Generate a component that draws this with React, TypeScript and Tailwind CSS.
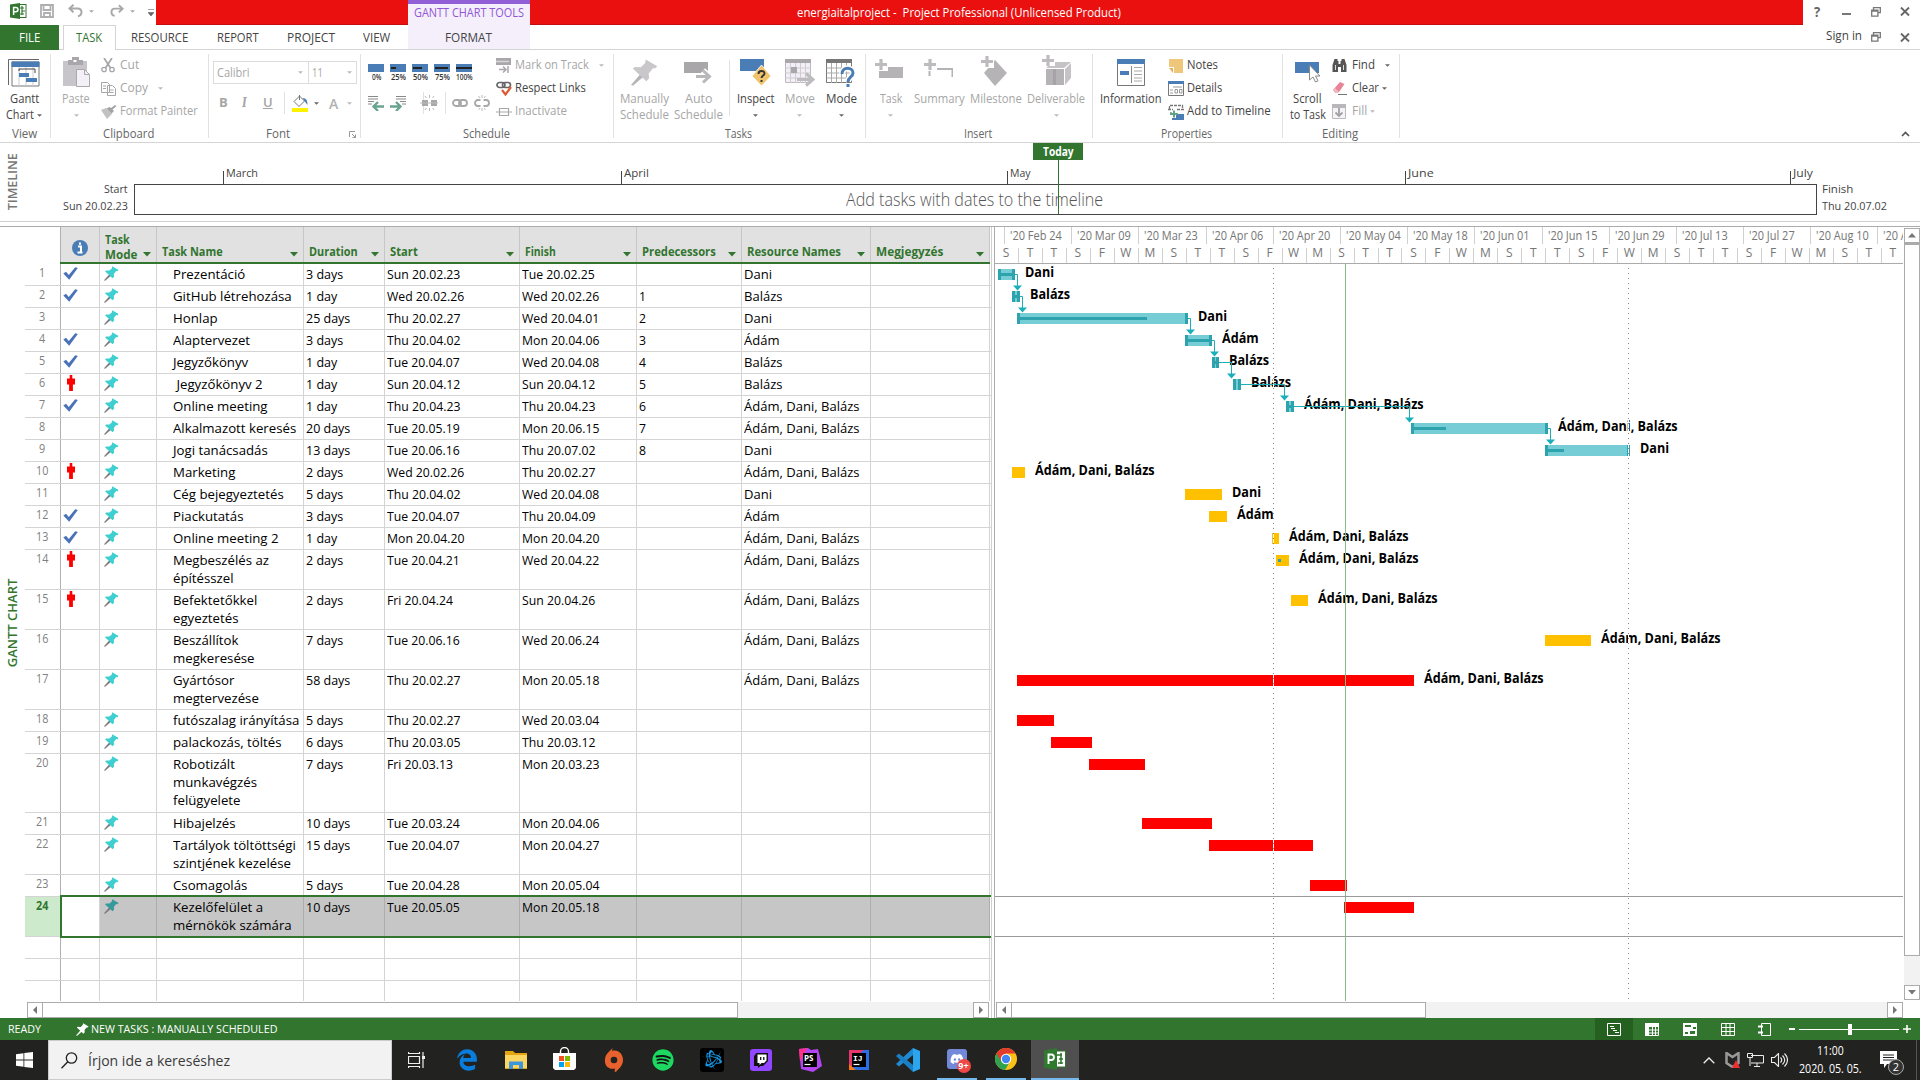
import React, { useLayoutEffect, useRef } from "react";
import { FaSpotify, FaTwitch, FaDiscord, FaEdgeLegacy, FaBattleNet } from "react-icons/fa";

/** Condensed text: scaled horizontally to a width, or by a factor. */
function T({ children, w, k = 0.94, c = "" }: { children: React.ReactNode; w?: number; k?: number; c?: string }) {
  const outer = useRef<HTMLSpanElement>(null);
  const inner = useRef<HTMLSpanElement>(null);
  useLayoutEffect(() => {
    const fit = () => {
      const n = inner.current!.offsetWidth;
      const target = w ?? n * k;
      outer.current!.style.width = target + "px";
      inner.current!.style.transform = `scaleX(${target / n})`;
    };
    fit();
    document.fonts?.ready.then(fit);
  }, [w, k]);
  return (
    <span ref={outer} className={"inline-block shrink-0 " + c}>
      <span ref={inner} className="inline-block origin-left whitespace-pre">{children}</span>
    </span>
  );
}

const Caret = ({ c = "text-[#666]", s = 5 }: { c?: string; s?: number }) => (
  <svg width={s} height={3} viewBox="0 0 6 3" className={"shrink-0 " + c}><path d="M0 0h6L3 3z" fill="currentColor" /></svg>
);

function Pin({ color = "#40cfd0", needle = "#777", s = 15 }: { color?: string; needle?: string; s?: number }) {
  return (
    <svg width={s} height={s} viewBox="0 0 15 15" className="shrink-0">
      <path d="M5.6 8.2 0.3 14.3l.8.3L7 9.6z" fill={needle} stroke={needle} strokeWidth=".4" />
      <path d="M8.2.3 14.6 4l-1.1 1.2-1.3-.1-2.400 3 .3 2.600-1.600 1.600L1 5.300l1.200-.9 3.200.2 2.400-2.200z" fill={color} />
    </svg>
  );
}
const Check = () => (
  <svg width="15" height="13" viewBox="0 0 15 13"><path d="M.3 6.500 3 4.800 5.800 8 12.200.2 14.800 1 6.200 12.800z" fill="#4a72b8" /></svg>
);
const Person = () => (
  <svg width="8" height="16" viewBox="0 0 8 16"><path d="M2.700 0h2.600v3.400H8v6H5.900V16H2.100V9.400H0v-6h2.700z" fill="#f00" /></svg>
);

/* ---------- title bar and tabs ---------- */
const WinBtns = () => (
  <svg width="10" height="10" viewBox="0 0 10 10" className="shrink-0"><path d="M2.500 2.500V.7H9.300v5H7M.7 3.200h6.200v6H.7zM.7 4h6.200" fill="none" stroke="#777" strokeWidth="1.300" /></svg>
);
const XIcon = () => <svg width="10" height="9" viewBox="0 0 10 9" className="shrink-0"><path d="M1 .5l8 8M9 .5l-8 8" stroke="#666" strokeWidth="1.900" /></svg>;

function TitleBar() {
  return (
    <div className="flex h-[25px] w-full bg-white">
      <div className="flex w-[156px] items-center pl-[10px] pb-[3px]">
        <svg width="17" height="16" viewBox="0 0 17 16"><rect x="8" y="1.500" width="8" height="13" fill="#fff" stroke="#31752f" /><path d="M10 5h4M12 8h3M10 11h4M12 3v9" stroke="#31752f" strokeWidth="1.200" /><path d="M0 1.500 10 0v16L0 14.500z" fill="#31752f" /><path d="M3.600 12V4.400h2.200a2 2 0 0 1 0 4.400H3.800" fill="none" stroke="#fff" strokeWidth="1.500" /></svg>
        <svg className="ml-[13px]" width="14" height="14" viewBox="0 0 14 14"><path d="M1 1h12v12H1zM3.500 1v5h7V1M4 13V9h6v4" fill="none" stroke="#b0aeb1" strokeWidth="1.800" /></svg>
        <svg className="ml-[14px]" width="15" height="14" viewBox="0 0 15 14"><path d="M1.500 4.500h8.200c5 0 5 7 .3 7.800M5.500.8 1.500 4.500l4 3.800" fill="none" stroke="#aaa8ab" strokeWidth="2" /></svg>
        <span className="ml-[6px] flex"><Caret c="text-[#aaa]" /></span>
        <svg className="ml-[16px]" width="14" height="14" viewBox="0 0 15 14"><path d="M13.500 4.500H5.300c-5 0-5 7-.3 7.800M9.500.8l4 3.700-4 3.800" fill="none" stroke="#aaa8ab" strokeWidth="2" /></svg>
        <span className="ml-[6px] flex"><Caret c="text-[#aaa]" /></span>
        <svg className="ml-[13px] mt-[3px]" width="6" height="7" viewBox="0 0 6 7"><path d="M0 .5h6M0 3.500h6L3 7z" fill="#666" stroke="#666" strokeWidth=".6" /></svg>
      </div>
      <div className="w-[252px] border-b border-[#c40d0d] bg-[#ea100f]" />
      <div className="flex w-[122px] justify-center border-t-4 border-[#925fd6] bg-[#f5effc] pr-[1px] text-[12px] leading-[17px] text-[#8e56d3]"><T w={110}>GANTT CHART TOOLS</T></div>
      <div className="flex w-[1273px] border-b border-[#c40d0d] bg-[#ea100f] pl-[267px] text-[12px] leading-[25px] text-white"><T w={324}>energiaitalproject -  Project Professional (Unlicensed Product)</T></div>
      <div className="flex flex-1 items-center pb-[2px] pl-[11px]">
        <span className="w-[9px] text-[14px] font-bold text-[#666]"><T>?</T></span>
        <span className="ml-[19px] mt-[5px] h-[2px] w-[9px] bg-[#777]" />
        <span className="ml-[20px]"><WinBtns /></span>
        <span className="ml-[19px]"><XIcon /></span>
      </div>
    </div>
  );
}

function Tabs() {
  return (
    <div className="flex h-[25px] w-full text-[12px] leading-[25px] text-[#444]">
      <div className="flex w-[59px] justify-center bg-[#31752f] text-white"><T w={21}>FILE</T></div>
      <div className="w-[4px] border-b border-[#d4d4d4]" />
      <div className="flex w-[53px] justify-center border-x border-t border-[#d4d4d4] pr-[2px] leading-[24px] text-[#31752f]"><T w={26}>TASK</T></div>
      <div className="flex flex-1 border-b border-[#d4d4d4]">
        <T w={57} c="ml-[15px]">RESOURCE</T>
        <T w={42} c="ml-[29px]">REPORT</T>
        <T w={48} c="ml-[28px]">PROJECT</T>
        <T w={27} c="ml-[28px]">VIEW</T>
        <div className="ml-[18px] flex w-[122px] justify-center bg-[#f5effc] pr-[2px]"><T w={47}>FORMAT</T></div>
        <div className="ml-auto flex h-[24px] items-center pr-[10px]">
          <T w={36} c="-mt-[4px] mr-[9px]">Sign in</T>
          <WinBtns /><span className="ml-[19px]"><XIcon /></span>
        </div>
      </div>
    </div>
  );
}

/* ---------- ribbon ---------- */
function Group({ label, w, lw, children, launcher }: { label: string; w: string; lw: number; children: React.ReactNode; launcher?: boolean }) {
  return (
    <div className={"flex h-[92px] shrink-0 flex-col " + w}>
      <div className="mt-[4px] flex h-[84px] flex-col border-r border-[#e1e1e1]">
        <div className="flex h-[72px] shrink-0">{children}</div>
        <div className="flex h-[16px] items-center text-[12px] leading-[16px] text-[#666]">
          <div className={"flex flex-1 justify-center pr-[2px] " + (launcher ? "pr-[0px]" : "")}><T w={lw}>{label}</T></div>
          {launcher && <svg className="mr-[4px]" width="7" height="7" viewBox="0 0 7 7"><path d="M.5 6V.5H6M3 3l3.500 3.500M6.500 3.500v3h-3" fill="none" stroke="#999" /></svg>}
        </div>
      </div>
    </div>
  );
}
function Big({ icon, l1, l2, w, w1, w2, dim, caret }: { icon: React.ReactNode; l1: string; l2?: string; w: string; w1: number; w2?: number; dim?: boolean; caret?: boolean }) {
  const col = dim ? "text-[#a6a6a6]" : "text-[#444]";
  return (
    <div className={`flex shrink-0 flex-col items-center text-[12px] leading-[16px] ${col} ${w}`}>
      <div className="flex h-[37px] items-center justify-center">{icon}</div>
      <T w={w1}>{l1}</T>
      <div className="flex h-[16px] items-center justify-center gap-[3px]">
        {l2 && <T w={w2}>{l2}</T>}
        {caret && <Caret c={dim ? "text-[#bbb]" : "text-[#666]"} />}
      </div>
    </div>
  );
}
function Small({ icon, l, w, dim, caret, cg = "ml-[10px]", iw = "w-[19px]" }: { icon: React.ReactNode; l: string; w: number; dim?: boolean; caret?: boolean; cg?: string; iw?: string }) {
  return (
    <div className={"flex h-[23px] items-center text-[12px] leading-[18px] " + (dim ? "text-[#a6a6a6]" : "text-[#444]")}>
      <span className={"flex shrink-0 items-center " + iw}>{icon}</span>
      <T w={w} c="-mt-[2px]">{l}</T>
      {caret && <span className={cg}><Caret c={dim ? "text-[#bbb]" : "text-[#666]"} /></span>}
    </div>
  );
}
const VSep = ({ c = "" }: { c?: string }) => <div className={"w-px bg-[#e1e1e1] " + c} />;

const Plus = ({ x, y }: { x: number; y: number }) => <path d={`M${x} ${y + 5.500}h12M${x + 6} ${y}v11`} stroke="#bdbbbe" strokeWidth="3.200" />;

function Ribbon() {
  return (
    <div className="flex h-[93px] border-b border-[#d4d4d4] bg-white">
      <Group label="View" w="w-[51px]" lw={25}>
        <Big w="w-[48px]" l1="Gantt" w1={29} l2="Chart" w2={28} caret icon={
          <svg width="32" height="28" viewBox="0 0 32 28"><path d="M.5 26V.5H31" fill="none" stroke="#666" /><path d="M4 3h27v24H4z" fill="#fff" stroke="#777" /><path d="M3.500 2.500h28V8h-28z" fill="#4a7db5" /><path d="M11 8v19M18 8v19M25 8v19" stroke="#ccc" /><path d="M11 10h16v4M11 10v2" fill="none" stroke="#444" /><path d="M11 14h10v4H11zM18 19h11v4H18z" fill="#4a7db5" /></svg>} />
      </Group>
      <Group label="Clipboard" w="w-[158px]" lw={51}>
        <Big w="w-[50px]" l1="Paste" w1={28} dim caret icon={
          <svg width="29" height="31" viewBox="0 0 29 31"><path d="M1 4h24v25H1z" fill="#c7c5c9" /><path d="M6 3h4V0h7v3h4v5H6z" fill="#a9a7ab" /><path d="M11.500 3h3v2h-3z" fill="#fff" /><path d="M14.500 12.500h8l5 5v12h-13z" fill="#f4f0f7" stroke="#aaa8ab" /><path d="M22.500 12.500v5h5" fill="none" stroke="#aaa8ab" /></svg>} />
        <div className="flex flex-col">
          <Small dim l="Cut" w={19} icon={<svg width="14" height="15" viewBox="0 0 14 15"><path d="M3 0l6.500 10M11 0 4.500 10" stroke="#a7a5a8" strokeWidth="1.700" fill="none" /><circle cx="3" cy="11.500" r="2.200" fill="none" stroke="#a7a5a8" strokeWidth="1.300" /><circle cx="11" cy="11.500" r="2.200" fill="none" stroke="#a7a5a8" strokeWidth="1.300" /></svg>} />
          <Small dim caret l="Copy" w={28} icon={<svg width="15" height="14" viewBox="0 0 15 14"><path d="M.5.500h6l2 2v8h-8zM6.500 3.500h5l3 3v7h-8z" fill="#fff" stroke="#a7a5a8" /><path d="M2 4h3M2 6.500h3M8.500 8h4M8.500 10.500h4" stroke="#a7a5a8" /></svg>} />
          <Small dim l="Format Painter" w={78} icon={<svg width="16" height="14" viewBox="0 0 16 14"><path d="M0 5l5-2 6 6-5 5z" fill="#c3c1c4" /><path d="M5.500 3.500l5 5L13 6l-1.500-1.500L15.500 1 14 0l-4 3-1.500-1z" fill="#a3a1a4" /></svg>} />
        </div>
      </Group>
      <Group label="Font" w="w-[152px]" lw={24} launcher>
        <div className="flex w-full flex-col pl-[4px] pt-[7px]">
          <div className="flex h-[23px] w-[144px] border border-[#dcdcdc] text-[12px] leading-[21px] text-[#a6a6a6]">
            <div className="flex flex-1 items-center justify-between border-r border-[#dcdcdc] pl-[3px] pr-[5px]"><T w={33}>Calibri</T><Caret c="text-[#bbb]" /></div>
            <div className="flex w-[47px] items-center justify-between pl-[3px] pr-[4px]"><T w={11}>11</T><Caret c="text-[#bbb]" /></div>
          </div>
          <div className="mt-[8px] flex h-[22px] items-center text-[13px] text-[#a6a6a6]">
            <span className="w-[21px] pl-[6px] font-bold">B</span>
            <span className="w-[23px] pl-[8px] font-serif font-semibold italic">I</span>
            <span className="w-[27px] pl-[6px] font-semibold underline">U</span>
            <VSep c="h-full" />
            <svg className="ml-[7px]" width="17" height="17" viewBox="0 0 17 17"><path d="M0 13h16v4H0z" fill="#fff200" /><path d="M2 6.500 7.500 1l5 5L7 11.500z" fill="#fff" stroke="#777" /><path d="M7.500 0v5" stroke="#777" /><path d="M10.500 3c4 0 5 3 5 7l-3-4z" fill="#4a7db5" /></svg>
            <span className="ml-[5px]"><Caret /></span>
            <span className="ml-[10px] w-[18px] text-[14px] font-semibold text-[#b3b1b4]">A</span>
            <Caret c="text-[#bbb]" />
          </div>
        </div>
      </Group>
      <Group label="Schedule" w="w-[253px]" lw={47}>
        <div className="flex w-[135px] flex-col pl-[7px] pt-[10px]">
          <div className="flex gap-[6px]">
            {[["0%", 0, 9], ["25%", 5, 15], ["50%", 9, 15], ["75%", 13, 15], ["100%", 16, 17]].map(([l, p, lw]) => (
              <div key={l} className="flex w-[16px] flex-col items-center">
                <svg width="16" height="8"><rect width="16" height="8" fill="#4a7db5" /><rect y="3" x={p === 16 ? 0 : 1} width={p as number} height="2" fill="#222" /></svg>
                <span className="h-[10px] text-[8px] font-semibold leading-[10px] text-[#333]"><T w={lw as number}>{l}</T></span>
              </div>
            ))}
          </div>
          <div className="mt-[10px] flex h-[22px] items-center">
            <svg width="16" height="15" viewBox="0 0 16 15"><path d="M0 .5h10M0 3h10M0 5.500h6M0 8h4" stroke="#888" /><path d="M16 10.500H6M10 6l-4.500 4.500L10 15" fill="none" stroke="#68a490" strokeWidth="2.400" /></svg>
            <svg className="ml-[6px]" width="16" height="15" viewBox="0 0 16 15"><path d="M6 .5h10M6 3h10M10 5.500h6M12 8h4" stroke="#888" /><path d="M0 10.500h10M6 6l4.500 4.500L6 15" fill="none" stroke="#68a490" strokeWidth="2.400" /></svg>
            <VSep c="ml-[17px] h-full" />
            <svg className="-ml-[5px]" width="20" height="16" viewBox="0 0 20 16"><path d="M3 5h6v6H3zM12 5h6v6h-6z" fill="#a9a7aa" /><path d="M1 8h18M10.500 0v3M6 1l1.500 2M15 1l-1.500 2M10.500 16v-3M6 15l1.500-2M15 15l-1.500-2" stroke="#bbb" /></svg>
            <VSep c="ml-[6px] h-full" />
            <svg className="ml-[6px]" width="16" height="8" viewBox="0 0 16 8"><rect x="1" y="1" width="8" height="6" rx="3" fill="none" stroke="#a9a7aa" strokeWidth="1.800" /><rect x="7" y="1" width="8" height="6" rx="3" fill="none" stroke="#a9a7aa" strokeWidth="1.800" /></svg>
            <svg className="ml-[6px]" width="16" height="16" viewBox="0 0 16 16"><path d="M6.500 5H4a3 3 0 0 0 0 6h2.500M9.500 5H12a3 3 0 0 1 0 6H9.500" fill="none" stroke="#a9a7aa" strokeWidth="1.800" /><path d="M8 0v3M4.500 1 6 3M11.500 1 10 3M8 16v-3M4.500 15 6 13M11.500 15 10 13" stroke="#bbb" /></svg>
          </div>
        </div>
        <div className="flex flex-col">
          <Small dim caret cg="ml-[10px]" iw="w-[19px]" l="Mark on Track" w={74} icon={<svg width="16" height="15" viewBox="0 0 16 15"><path d="M0 0h15v7H0z" fill="#a9a7aa" /><path d="M0 3.500h13" stroke="#d8d6d9" strokeWidth="1.500" /><path d="M3 11.500h6M7 8.500l3 3-3 3M12 8v7" fill="none" stroke="#a9a7aa" strokeWidth="1.500" /></svg>} />
          <Small l="Respect Links" w={71} iw="w-[19px]" icon={<svg width="16" height="15" viewBox="0 0 16 15"><rect x="1" y="1.500" width="8" height="5" rx="2.500" fill="none" stroke="#666" strokeWidth="1.700" /><rect x="6.500" y="1.500" width="8" height="5" rx="2.500" fill="none" stroke="#666" strokeWidth="1.700" /><path d="M6 9l3.500 4.500L15 6" fill="none" stroke="#dc5a34" strokeWidth="2.200" /></svg>} />
          <Small dim l="Inactivate" w={52} iw="w-[19px]" icon={<svg width="16" height="8" viewBox="0 0 16 8"><path d="M3.500.500h9v7h-9zM0 4h16" fill="none" stroke="#a9a7aa" strokeWidth="1.200" /></svg>} />
        </div>
      </Group>
      <Group label="Tasks" w="w-[252px]" lw={27}>
        <div className="w-[4px]" />
        <Big w="w-[53px]" dim l1="Manually" w1={49} l2="Schedule" w2={49} icon={<Pin s={27} color="#c9c7ca" needle="#b5b3b6" />} />
        <Big w="w-[54px]" dim l1="Auto" w1={27} l2="Schedule" w2={49} icon={<svg width="29" height="22" viewBox="0 0 29 22"><path d="M0 0h24v11H0z" fill="#a9a7aa" /><path d="M12 14.500h13M19 8.500l6.500 6-6.500 6" fill="none" stroke="#fff" strokeWidth="6" /><path d="M12 14.500h14M19 8.500l6.500 6-6.500 6" fill="none" stroke="#b9b7ba" strokeWidth="3" /></svg>} />
        <VSep c="ml-[4px] mt-[6px] h-[56px]" />
        <Big w="w-[51px]" caret l1="Inspect" w1={38} icon={<svg width="31" height="28" viewBox="0 0 31 28"><path d="M0 0h24v12H0z" fill="#4a7db5" /><path d="M21.500 6 31 17l-9.500 10L12 17z" fill="#f0c36d" stroke="#fff" strokeWidth=".8" /><path d="M18.500 15c0-4 6-4 6-.500 0 2-3 2-3 4.500M21.500 21v2" fill="none" stroke="#333" strokeWidth="1.900" /></svg>} />
        <Big w="w-[37px]" dim caret l1="Move" w1={30} icon={<svg width="30" height="28" viewBox="0 0 30 28"><path d="M.5.500h25v23H.5z" fill="#f4eef8" stroke="#bbb" /><path d="M0 0h26v4H0z" fill="#a9a7aa" /><path d="M.5 9h25M.5 14h25M.5 19h25M5.500 4v20M10.500 4v20M15.500 4v20M20.500 4v20" stroke="#cfcdd0" /><path d="M6 8h6v6H6z" fill="#a9a7aa" /><path d="M12 20.500h15M21 14.500l7 6-7 6" fill="none" stroke="#bdbbbe" strokeWidth="3" /></svg>} />
        <Big w="w-[46px]" caret l1="Mode" w1={31} icon={<svg width="30" height="28" viewBox="0 0 30 28"><path d="M.5.500h25v23H.5z" fill="#fff" stroke="#777" /><path d="M0 0h26v4H0z" fill="#777" /><path d="M.5 9h25M.5 14h25M.5 19h25M5.500 4v20M10.500 4v20M15.500 4v20M20.500 4v20" stroke="#aaa" /><path d="M16 15c0-8 11-7 11-1 0 4-5 4-5 9M22 25v3" fill="none" stroke="#fff" strokeWidth="6" /><path d="M16 15c0-8 11-7 11-1 0 4-5 4-5 9M22 25v3" fill="none" stroke="#4a7db5" strokeWidth="3" /></svg>} />
      </Group>
      <Group label="Insert" w="w-[227px]" lw={28}>
        <div className="w-[3px]" />
        <Big w="w-[43px]" dim caret l1="Task" w1={22} icon={<svg className="-ml-[3px] -mt-[8px]" width="28" height="20" viewBox="0 0 28 20"><path d="M4 8h24v11H4z" fill="#b5b3b6" /><path d="M4 5h9v7H4z" fill="#fff" /><Plus x={0} y={0} /></svg>} />
        <Big w="w-[54px]" dim l1="Summary" w1={51} icon={<svg className="-ml-[2px] -mt-[10px]" width="29" height="18" viewBox="0 0 29 18"><path d="M5.500 17v-7h23v8" fill="none" stroke="#b5b3b6" strokeWidth="2" /><path d="M4 5h9v7H4z" fill="#fff" /><Plus x={0} y={0} /></svg>} />
        <Big w="w-[60px]" dim l1="Milestone" w1={52} icon={<svg className="-ml-[4px] -mt-[2px]" width="26" height="31" viewBox="0 0 26 31"><path d="M14 4l12 13-12 13L3 17z" fill="#b5b3b6" /><path d="M0 0h13v12H0z" fill="#fff" /><Plus x={0} y={0} /></svg>} />
        <Big w="w-[60px]" dim caret l1="Deliverable" w1={58} icon={<svg className="-mt-[4px]" width="29" height="31" viewBox="0 0 29 31"><path d="M4 14h18v16H4z" fill="#b5b3b6" /><path d="M4 13l7-6h18l-7 6zM23 14l6-6v15l-6 7z" fill="#c5c3c6" /><path d="M11 14h3v16h-3z" fill="#a5a3a6" /><path d="M0 0h13v11H0z" fill="#fff" /><Plus x={0} y={0} /></svg>} />
      </Group>
      <Group label="Properties" w="w-[190px]" lw={51}>
        <Big w="w-[75px]" l1="Information" w1={62} icon={<svg width="28" height="27" viewBox="0 0 28 27"><path d="M.5.500h27v26H.5z" fill="#fff" stroke="#777" /><path d="M0 0h28v5H0z" fill="#4a7db5" /><path d="M3 12h9v4H3z" fill="#4a7db5" /><path d="M14.500 7v17" stroke="#888" /><path d="M17 8.500h8M17 12h8M17 15.500h8M17 19h8M17 22h8" stroke="#aaa" /></svg>} />
        <div className="flex flex-col">
          <Small l="Notes" w={31} iw="w-[19px]" icon={<svg className="ml-[1px]" width="14" height="14" viewBox="0 0 14 14"><path d="M0 0h14v14H5V8H0z" fill="#eec77a" /><path d="M0 9h4v5z" fill="#e0b35b" /></svg>} />
          <Small l="Details" w={35} iw="w-[19px]" icon={<svg width="16" height="15" viewBox="0 0 16 15"><path d="M.5.500h15v14H.5z" fill="#fff" stroke="#777" /><path d="M0 0h16v3H0z" fill="#4a7db5" /><path d="M5 6h9M2 9h3M2 12h3M7 8.500h2.500v3.500H7zM11.500 8.500H14v3.500h-2.500z" fill="none" stroke="#999" /></svg>} />
          <Small l="Add to Timeline" w={84} iw="w-[19px]" icon={<svg width="16" height="16" viewBox="0 0 16 16"><path d="M1.500 5V1.500h13V5M0 5.500h5M9 5.500h7M3 8v4" fill="none" stroke="#777" strokeWidth="1.300" strokeDasharray="3 1" /><path d="M8 10h8v6H4v-2h4z" fill="#4a7db5" /><path d="M2 10h8M6 6.500v7" stroke="#5fa386" strokeWidth="2" /></svg>} />
        </div>
      </Group>
      <Group label="Editing" w="w-[117px]" lw={36}>
        <Big w="w-[49px]" l1="Scroll" w1={29} l2="to Task" w2={36} icon={<svg width="26" height="21" viewBox="0 0 26 21"><path d="M0 0h24v11H0z" fill="#4a7db5" /><path d="M14.500 3v15l3.500-3 2.500 5 2.500-1.200-2.500-4.800H25z" fill="#fff" stroke="#888" /></svg>} />
        <div className="flex flex-col">
          <Small l="Find" w={23} caret iw="w-[20px]" icon={<svg width="15" height="13" viewBox="0 0 15 13"><path d="M2.500 0h3v2h1v3h2V2h1V0h3l2 6v7H9V8H6v5H.5V6z" fill="#555" /><path d="M3.500 6v5M11.500 6v5" stroke="#ddd" /></svg>} />
          <Small l="Clear" w={27} caret cg="ml-[3px]" iw="w-[20px]" icon={<svg width="15" height="13" viewBox="0 0 15 13"><path d="M8 0l4.500 2L7 10l-3.500 1L1 8z" fill="#ea8396" /><path d="M1 8l3 3 3-1-4-4z" fill="#f5b7c0" /><path d="M6 12.500h9" stroke="#777" /></svg>} />
          <Small dim l="Fill" w={15} caret cg="ml-[3px]" iw="w-[20px]" icon={<svg width="14" height="15" viewBox="0 0 14 15"><path d="M.5.500h13v14H.5z" fill="#f6f3f8" stroke="#bbb" /><path d="M0 0h14v4H0z" fill="#b9b7ba" /><path d="M7 4v8M3.500 8.500 7 12l3.500-3.500" fill="none" stroke="#a3a1a4" strokeWidth="1.800" /></svg>} />
        </div>
      </Group>
      <div className="flex flex-1 items-end justify-end pb-[5px] pr-[10px]">
        <svg width="9" height="6" viewBox="0 0 9 6"><path d="M1 5l3.500-3.500L8 5" fill="none" stroke="#555" strokeWidth="1.700" /></svg>
      </div>
    </div>
  );
}

/* ---------- timeline ---------- */
const months: [string, number, number][] = [["March", 223, 32], ["April", 621, 25], ["May", 1007, 21], ["June", 1405, 26], ["July", 1790, 20]];
function Timeline() {
  return (
    <div className="flex h-[79px] border-b border-[#cfcfcf] bg-white text-[11.500px] text-[#444]">
      <div className="flex w-[25px] items-center justify-center">
        <span className="-rotate-90 whitespace-nowrap text-[13px] font-semibold text-[#777]"><T w={57}>TIMELINE</T></span>
      </div>
      <div className="flex w-[109px] flex-col items-end pr-[6px] pt-[37px] leading-[17px]"><T w={24}>Start</T><T w={65}>Sun 20.02.23</T></div>
      <div className="relative w-[1683px] shrink-0 pt-[41px]">
        <div className="flex h-[31px] items-center justify-center border border-[#444] text-[18px] font-light leading-[28px] text-[#555]">
          <T w={257} c="-ml-[2px] -mt-[1px]">Add tasks with dates to the timeline</T>
        </div>
        {months.map(([m, x, w]) => (
          <div key={m} className="absolute top-[28px] flex h-[13px] border-l border-[#444] pl-[2px] leading-[4px]" style={{ left: x - 134 }}><T w={w}>{m}</T></div>
        ))}
        <div className="absolute left-[924px] top-[17px] h-[54px] w-px bg-[#31752f]" />
        <div className="absolute left-[899px] top-0 flex h-[17px] w-[50px] justify-center bg-[#31752f] font-bold leading-[17px] text-white"><T w={31}>Today</T></div>
      </div>
      <div className="flex flex-col pl-[5px] pt-[37px] leading-[17px]"><T w={31}>Finish</T><T w={65}>Thu 20.07.02</T></div>
    </div>
  );
}

/* ---------- sheet ---------- */
type Row = { i?: "c" | "p"; n: string[]; d: string; s: string; f: string; p?: string; r?: string };
const A = "Ádám, Dani, Balázs";
const rows: Row[] = [
  { i: "c", n: ["Prezentáció"], d: "3 days", s: "Sun 20.02.23", f: "Tue 20.02.25", r: "Dani" },
  { i: "c", n: ["GitHub létrehozása"], d: "1 day", s: "Wed 20.02.26", f: "Wed 20.02.26", p: "1", r: "Balázs" },
  { n: ["Honlap"], d: "25 days", s: "Thu 20.02.27", f: "Wed 20.04.01", p: "2", r: "Dani" },
  { i: "c", n: ["Alaptervezet"], d: "3 days", s: "Thu 20.04.02", f: "Mon 20.04.06", p: "3", r: "Ádám" },
  { i: "c", n: ["Jegyzőkönyv"], d: "1 day", s: "Tue 20.04.07", f: "Wed 20.04.08", p: "4", r: "Balázs" },
  { i: "p", n: [" Jegyzőkönyv 2"], d: "1 day", s: "Sun 20.04.12", f: "Sun 20.04.12", p: "5", r: "Balázs" },
  { i: "c", n: ["Online meeting"], d: "1 day", s: "Thu 20.04.23", f: "Thu 20.04.23", p: "6", r: A },
  { n: ["Alkalmazott keresés"], d: "20 days", s: "Tue 20.05.19", f: "Mon 20.06.15", p: "7", r: A },
  { n: ["Jogi tanácsadás"], d: "13 days", s: "Tue 20.06.16", f: "Thu 20.07.02", p: "8", r: "Dani" },
  { i: "p", n: ["Marketing"], d: "2 days", s: "Wed 20.02.26", f: "Thu 20.02.27", r: A },
  { n: ["Cég bejegyeztetés"], d: "5 days", s: "Thu 20.04.02", f: "Wed 20.04.08", r: "Dani" },
  { i: "c", n: ["Piackutatás"], d: "3 days", s: "Tue 20.04.07", f: "Thu 20.04.09", r: "Ádám" },
  { i: "c", n: ["Online meeting 2"], d: "1 day", s: "Mon 20.04.20", f: "Mon 20.04.20", r: A },
  { i: "p", n: ["Megbeszélés az", "építésszel"], d: "2 days", s: "Tue 20.04.21", f: "Wed 20.04.22", r: A },
  { i: "p", n: ["Befektetőkkel", "egyeztetés"], d: "2 days", s: "Fri 20.04.24", f: "Sun 20.04.26", r: A },
  { n: ["Beszállítok", "megkeresése"], d: "7 days", s: "Tue 20.06.16", f: "Wed 20.06.24", r: A },
  { n: ["Gyártósor", "megtervezése"], d: "58 days", s: "Thu 20.02.27", f: "Mon 20.05.18", r: A },
  { n: ["futószalag irányítása"], d: "5 days", s: "Thu 20.02.27", f: "Wed 20.03.04" },
  { n: ["palackozás, töltés"], d: "6 days", s: "Thu 20.03.05", f: "Thu 20.03.12" },
  { n: ["Robotizált", "munkavégzés", "felügyelete"], d: "7 days", s: "Fri 20.03.13", f: "Mon 20.03.23" },
  { n: ["Hibajelzés"], d: "10 days", s: "Tue 20.03.24", f: "Mon 20.04.06" },
  { n: ["Tartályok töltöttségi", "szintjének kezelése"], d: "15 days", s: "Tue 20.04.07", f: "Mon 20.04.27" },
  { n: ["Csomagolás"], d: "5 days", s: "Tue 20.04.28", f: "Mon 20.05.04" },
  { n: ["Kezelőfelület a", "mérnökök számára"], d: "10 days", s: "Tue 20.05.05", f: "Mon 20.05.18" },
];
const cols = "grid grid-cols-[36px_39px_57px_147px_81px_135px_117px_105px_129px_119px]";
const rowH = ["", "h-[22px]", "h-[40px]", "h-[59px]"];

function HCell({ l, w, two }: { l: string; w: number; two?: string }) {
  return (
    <div className="flex items-end justify-between border-r border-[#c6c6c6] pl-[5px] pr-[5px]">
      <div className={"flex flex-col leading-[15px] " + (two ? "" : "mb-[3px]")}><T w={two ? 25 : w}>{l}</T>{two && <T w={w}>{two}</T>}</div>
      <span className="mb-[5px] h-[5px] shrink-0"><svg width="8" height="5" viewBox="0 0 8 5"><path d="M0 0h8L4 4.500z" fill="#31752f" /></svg></span>
    </div>
  );
}

function Sheet() {
  return (
    <div className="flex w-[966px] flex-col">
      <div className="flex h-[37px] pl-[35px] text-[12px] font-bold text-[#31752f]">
        <div className="grid grid-cols-[40px_57px_147px_81px_135px_117px_105px_129px_119px] border-b-2 border-[#31752f] bg-[#e1e1e1]">
          <div className="flex items-center justify-center border-x border-l-[#b0b0b0] border-r-[#c6c6c6] pt-[6px]">
            <svg width="16" height="16" viewBox="0 0 16 16"><circle cx="8" cy="8" r="8" fill="#4a7db5" /><path d="M6 6.500h3V12M5.500 12.500h5M8 2.500v2.300" stroke="#fff" strokeWidth="2" fill="none" /></svg>
          </div>
          <HCell l="Task" two="Mode" w={32} />
          <HCell l="Task Name" w={61} />
          <HCell l="Duration" w={49} />
          <HCell l="Start" w={28} />
          <HCell l="Finish" w={31} />
          <HCell l="Predecessors" w={74} />
          <HCell l="Resource Names" w={94} />
          <HCell l="Megjegyzés" w={67} />
        </div>
      </div>
      <div className="flex h-[737px] flex-col overflow-hidden">
        {rows.map((r, i) => {
          const sel = i === 23;
          const cell = "border-r pt-[1px] pl-[2px] " + (sel ? "border-[#adadad] bg-[#c6c6c6]" : "border-[#d4d4d4]");
          return (
            <div key={i} className={`${cols} relative shrink-0 text-[13.500px] leading-[18px] text-black ${rowH[r.n.length]} border-b border-[#d4d4d4]`}>
              <div className={"flex justify-center border-r border-[#b0b0b0] text-[12px] leading-[18px] " + (sel ? "bg-[#cdeacd] font-bold text-[#31752f]" : "text-[#808080]")}><T k={0.9}>{i + 1}</T></div>
              <div className="flex border-r border-[#d4d4d4] pl-[2px] pt-[3px]">{r.i === "c" ? <Check /> : r.i === "p" ? <span className="-mt-[2px] ml-[4px]"><Person /></span> : null}</div>
              <div className={"flex border-r pl-[4px] pt-[2px] " + (sel ? "border-[#adadad] bg-[#c6c6c6]" : "border-[#d4d4d4]")}><Pin color={sel ? "#369a9c" : "#40cfd0"} /></div>
              <div className={"flex flex-col border-r pl-[16px] pt-[1px] " + (sel ? "border-[#adadad] bg-[#c6c6c6]" : "border-[#d4d4d4]")}>{r.n.map((n) => <T key={n} k={0.98}>{n}</T>)}</div>
              <div className={cell}><T k={0.925}>{r.d}</T></div>
              <div className={cell}><T k={0.907}>{r.s}</T></div>
              <div className={cell}><T k={0.907}>{r.f}</T></div>
              <div className={cell}><T k={0.907}>{r.p ?? " "}</T></div>
              <div className={cell}><T k={0.965}>{r.r ?? " "}</T></div>
              <div className={cell} />
              {sel && <div className="absolute -top-[2px] -bottom-[2px] left-[35px] right-0 border-2 border-r-0 border-[#31752f]" />}
            </div>
          );
        })}
        {[0, 1, 2].map((i) => (
          <div key={i} className={`${cols} shrink-0 border-[#d4d4d4] ${i === 2 ? "h-[20px]" : "h-[22px] border-b"}`}>
            <div className="border-r border-[#b0b0b0]" />
            {[1, 2, 3, 4, 5, 6, 7, 8, 9].map((c) => <div key={c} className="border-r border-[#d4d4d4]" />)}
          </div>
        ))}
      </div>
      <div className="ml-[2px] mt-[1px] flex h-[16px] w-[962px] bg-[#f2f2f2]">
        <SBtn d="M5 0v8L1 4z" />
        <div className="-ml-px w-[696px] border border-[#ababab] bg-white" />
        <div className="flex-1" />
        <SBtn d="M1 0v8l4-4z" />
      </div>
    </div>
  );
}
const SBtn = ({ d }: { d: string }) => (
  <div className="flex h-[16px] w-[16px] shrink-0 items-center justify-center border border-[#ababab] bg-white"><svg width="6" height="8" viewBox="0 0 6 8"><path d={d} fill="#777" /></svg></div>
);

/* ---------- chart ---------- */
type Bar = [row: number, x0: number, x1: number, kind: "t" | "y" | "r", label?: string, progress?: number];
const bars: Bar[] = [
  [0, 998, 1015, "t", "Dani", 1015], [1, 1012, 1020, "t", "Balázs", 1020], [2, 1017, 1188, "t", "Dani", 1147],
  [3, 1185, 1212, "t", "Ádám", 1212], [4, 1212, 1219, "t", "Balázs", 1219], [5, 1233, 1241, "t", "Balázs"],
  [6, 1286, 1294, "t", A, 1294], [7, 1411, 1548, "t", A, 1446], [8, 1545, 1630, "t", "Dani", 1564],
  [9, 1012, 1025, "y", A], [10, 1185, 1222, "y", "Dani"], [11, 1209, 1227, "y", "Ádám"], [12, 1272, 1279, "y", A],
  [13, 1276, 1289, "y", A], [14, 1291, 1308, "y", A], [15, 1545, 1591, "y", A], [16, 1017, 1414, "r", A],
  [17, 1017, 1054, "r"], [18, 1051, 1092, "r"], [19, 1089, 1145, "r"], [20, 1142, 1212, "r"], [21, 1209, 1313, "r"],
  [22, 1310, 1347, "r"], [23, 1344, 1414, "r"],
];
const tops: number[] = [];
rows.reduce((y, r) => { tops.push(y); return y + [0, 22, 40, 59][r.n.length]; }, 0);
const fills = { t: "bg-[#76cdd5]", y: "bg-[#ffc000]", r: "bg-[#ff0000]" };
const links = [[1015, 1017], [1020, 1022], [1188, 1190], [1212, 1214], [1219, 1231], [1241, 1284], [1294, 1409], [1548, 1550]];
const dates = ["Feb 24", "Mar 09", "Mar 23", "Apr 06", "Apr 20", "May 04", "May 18", "Jun 01", "Jun 15", "Jun 29", "Jul 13", "Jul 27", "Aug 10", "Aug 24"];
const days = ["S", "T", "T", "S", "F", "W", "M"];

function Chart() {
  return (
    <div className="flex w-[909px] shrink-0 flex-col overflow-hidden border-l border-[#ababab]">
      <div className="flex h-[37px] w-[908px] shrink-0 flex-col overflow-hidden border-b border-[#ababab] text-[12px] text-[#757575]">
        <div className="ml-[9px] flex h-[17px]">
          {dates.map((d) => <div key={d} className="w-[67.200px] shrink-0 border-l border-[#d0d0d0] pl-[5px] leading-[18px]"><T k={0.915}>{"'20 " + d}</T></div>)}
        </div>
        <div className="mt-[3px] flex h-[16px]">
          {Array.from({ length: 38 }, (_, i) => (
            <div key={i} className="mt-px flex w-[23.980px] shrink-0 justify-center border-r border-[#d0d0d0] pr-[1px] leading-[12px]"><span className="-mt-[1px]">{days[i % 7]}</span></div>
          ))}
        </div>
      </div>
      <div className="relative h-[737px] w-full shrink-0 overflow-hidden">
        {bars.map(([r, a, b, kind, label, prog], i) => (
          <React.Fragment key={i}>
            <div className={`absolute h-[11px] ${fills[kind]} ${kind === "t" ? "border-x-3 border-[#2ca3ad]" : ""}`} style={{ left: a - 995, top: tops[r] + 5, width: b - a }} />
            {prog && <div className="absolute h-[3px] bg-[#2ca3ad]" style={{ left: a - 995, top: tops[r] + 9, width: prog - a }} />}
            {label && <div className="absolute text-[13.500px] font-bold leading-[18px] text-black" style={{ left: b + 10 - 995, top: tops[r] - 1 }}><T k={0.935}>{label}</T></div>}
          </React.Fragment>
        ))}
        <div className="absolute left-[283px] top-[295px] h-[3px] w-[3px] bg-[#2ca3ad]" />
        <svg className="absolute left-0 top-0" width="908" height="737">
          {links.map(([a, b], i) => {
            const y = tops[i] + 10.500;
            return (
              <g key={i}>
                <path d={`M${a - 995} ${y}H${b - 994.500}V${y + 12}`} fill="none" stroke="#1aafba" />
                <path d={`M${b - 999} ${y + 11}h9l-4.500 5z`} fill="#1aafba" />
              </g>
            );
          })}
          <path d="M278.500 4V737M633.500 4V737" stroke="#fff" />
          <path d="M278.500 4V737M633.500 4V737" stroke="#8a8a8a" strokeDasharray="1 4" />
          <path d="M350.500 0V737" stroke="#86bb8a" />
          <path d="M0 632.500H908M0 672.500H908" stroke="#9a9a9a" />
        </svg>
      </div>
      <div className="ml-[1px] mt-[1px] flex h-[16px] w-[907px] shrink-0 bg-[#f2f2f2]">
        <SBtn d="M5 0v8L1 4z" />
        <div className="-ml-px w-[415px] border border-[#ababab] bg-white" />
        <div className="flex-1" />
        <SBtn d="M1 0v8l4-4z" />
      </div>
    </div>
  );
}

/* ---------- status bar and taskbar ---------- */
function Status() {
  return (
    <div className="flex h-[22px] items-center bg-[#31752f] text-[11px] text-white">
      <T w={33} c="ml-[8px]">READY</T>
      <span className="ml-[35px]"><Pin s={13} color="#fff" needle="#fff" /></span>
      <T w={186} c="ml-[2px]">NEW TASKS : MANUALLY SCHEDULED</T>
      <div className="ml-auto flex h-full items-center">
        <div className="flex h-full w-[38px] items-center justify-center bg-[#24601f]"><svg width="14" height="13" viewBox="0 0 14 13"><path d="M.5.500h13v12H.5zM3 3.500h4M4 5.500h4M6 7.500h4M8 9.500h4" fill="none" stroke="#fff" /></svg></div>
        <div className="flex w-[38px] justify-center"><svg width="14" height="13" viewBox="0 0 14 13"><path d="M0 0h14v4H0zM0 4h4v9H0z" fill="#fff" /><path d="M.5.500h13v12H.5zM7.500 4v9M10.500 4v9M0 7h14M0 10h14" fill="none" stroke="#fff" /></svg></div>
        <div className="flex w-[38px] justify-center"><svg width="14" height="13" viewBox="0 0 14 13"><path d="M0 0h14v13H0z" fill="#fff" /><path d="M2 2h6v2H2zM10 4h3v2h-3zM2 9h3v2H2zM7 8h5v3H7z" fill="#31752f" /></svg></div>
        <div className="flex w-[37px] justify-center"><svg width="14" height="13" viewBox="0 0 14 13"><path d="M.5.500h13v12H.5zM5 0v13M9 0v13M0 4.500h14M0 8.500h14" fill="none" stroke="#fff" /></svg></div>
        <div className="flex w-[38px] justify-center"><svg width="14" height="13" viewBox="0 0 14 13"><path d="M3.500.500h9v12h-9z" fill="none" stroke="#fff" /><path d="M0 2.500h5v2H0zM0 8.500h5v2H0z" fill="#fff" /></svg></div>
        <div className="ml-[5px] h-[2px] w-[6px] bg-white" />
        <div className="ml-[4px] flex h-[12px] w-[100px] items-center"><div className="h-px w-[49px] bg-white" /><div className="h-[11px] w-[4px] bg-white" /><div className="h-px flex-1 bg-white" /></div>
        <svg className="ml-[4px] mr-[9px]" width="8" height="8"><path d="M0 4h8M4 0v8" stroke="#fff" strokeWidth="1.600" /></svg>
      </div>
    </div>
  );
}

const App49 = ({ children, active, line }: { children: React.ReactNode; active?: boolean; line?: boolean }) => (
  <div className="flex h-full w-[49px] shrink-0 flex-col items-center">
    <div className={"flex w-[48px] flex-1 items-center justify-center " + (active ? "bg-[#4f4f4f]" : "")}>{children}</div>
    {line && <div className={"h-[2px] bg-[#76b9ed] " + (active ? "w-[48px]" : "w-[40px]")} />}
  </div>
);

function Taskbar() {
  return (
    <div className="flex h-[40px] bg-[#222220] text-white">
      <div className="flex w-[48px] items-center justify-center"><svg width="17" height="16" viewBox="0 0 17 16"><path d="M0 2.200 7.500 1.200v6.400H0zM8.300 1.100 17 0v7.600H8.300zM0 8.400h7.500v6.400L0 13.800zM8.300 8.400H17V16l-8.700-1.100z" fill="#fff" /></svg></div>
      <div className="mr-[1px] flex w-[344px] items-center border border-[#ccc] bg-[#f2f2f2] text-[15px] text-[#3a3a3a]">
        <svg className="ml-[12px]" width="17" height="17" viewBox="0 0 17 17"><circle cx="10.500" cy="6" r="5.200" fill="none" stroke="#222" strokeWidth="1.300" /><path d="M6.800 9.800.5 16.300" stroke="#222" strokeWidth="1.400" /></svg>
        <T w={142} c="ml-[10px]">Írjon ide a kereséshez</T>
      </div>
      <App49><svg className="-ml-[2px]" width="17" height="16" viewBox="0 0 17 16"><path d="M.5 4.500h11v7H.5zM.5 0v1.500h11V0M.5 16v-1.500h11V16M15 0v16" fill="none" stroke="#eee" strokeWidth="1.200" /><path d="M14 4h3v3h-3z" fill="#eee" /></svg></App49>
      <App49><FaEdgeLegacy size={22} color="#0a7cdb" /></App49>
      <App49><svg width="22" height="18" viewBox="0 0 22 18"><path d="M0 0h8l2 2h12v16H0z" fill="#e5a50e" /><path d="M0 4h22v13H0z" fill="#fcd663" /><path d="M4 18v-7.500h14V18h-4v-4H8v4z" fill="#3d96dc" /></svg></App49>
      <App49><svg className="-mt-[2px]" width="23" height="24" viewBox="0 0 23 24"><path d="M7.500 7V4.500a4 4 0 0 1 8 0V7" fill="none" stroke="#fff" strokeWidth="1.400" /><path d="M0 6h23v15l-2 2H2l-2-2z" fill="#fff" /><path d="M6 9h5v5H6z" fill="#f25022" /><path d="M12 9h5v5h-5z" fill="#7fba00" /><path d="M6 15h5v5H6z" fill="#00a4ef" /><path d="M12 15h5v5h-5z" fill="#ffb900" /></svg></App49>
      <App49><svg width="20" height="24" viewBox="0 0 20 24"><path d="M8.500 0 8 3c6-2 11 3 11 9 0 6-5 9-7 12l-1.500-.5.500-3C5 22 0 18 1 11 1.500 6 6 3 8.500 0z" fill="#e9612c" /><circle cx="10" cy="12" r="3.300" fill="#222220" /></svg></App49>
      <App49><span className="rounded-full bg-[#111]"><FaSpotify size={22} color="#1ed760" /></span></App49>
      <App49><span className="flex h-[24px] w-[24px] items-center justify-center rounded-[3px] bg-black"><FaBattleNet size={20} color="#1596e0" /></span></App49>
      <App49><span className="flex h-[22px] w-[22px] items-center justify-center rounded-[3px] bg-[#9146ff]"><svg width="15" height="15" viewBox="0 0 15 15"><path d="M3.500 0H15v8l-5 5H7.500L5 15v-2H1V3z" fill="#111" /><path d="M4.500 1.500H13.500v6L11 10H8.500L6.500 12v-2h-2z" fill="#fff" /><path d="M7.700 4v3M10.800 4v3" stroke="#111" strokeWidth="1.300" /></svg></span></App49>
      <App49><svg width="24" height="24" viewBox="0 0 24 24"><path d="M1 1l9-1 3 2 7-1 2 8 2 9-9 6-12-3z" fill="#b345f1" /><path d="M1 1l8-1-7 14z" fill="#ff318c" /><rect x="5" y="5" width="14" height="14" fill="#000" /><text x="6" y="12.500" fontSize="8" fontWeight="700" fill="#fff" fontFamily="Open Sans">PS</text><path d="M6.500 16.500h6" stroke="#fff" strokeWidth="1.200" /></svg></App49>
      <App49><svg width="20" height="20" viewBox="0 0 20 20"><path d="M0 0h20v20H0z" fill="#2b6fe8" /><path d="M0 0h15L5 8 4 18H0z" fill="#e8356b" /><path d="M0 14 7 20H0z" fill="#f97a12" /><rect x="3" y="3" width="14" height="14" fill="#000" /><text x="4" y="11" fontSize="8" fontWeight="700" fill="#fff" fontFamily="Liberation Mono">IJ</text><path d="M4.500 14.500h6" stroke="#fff" strokeWidth="1.200" /></svg></App49>
      <App49><svg width="24" height="24" viewBox="0 0 24 24"><path d="M17 0l7 3v18l-7 3z" fill="#2aa5ee" /><path d="M17 0v7L3 18.500 0 16z" fill="#1f8ad2" /><path d="M17 24v-7L3 5.500 0 8z" fill="#1b7fc4" /></svg></App49>
      <App49 line><span className="relative flex h-[20px] w-[20px] items-center justify-center rounded-[3px] bg-[#7289da]"><FaDiscord size={14} color="#fff" /><span className="absolute -bottom-[4px] -right-[4px] flex h-[14px] w-[14px] items-center justify-center rounded-full bg-[#f04747] text-[9px] font-bold">9+</span></span></App49>
      <App49 line><svg width="22" height="22" viewBox="0 0 22 22"><circle cx="11" cy="11" r="11" fill="#fbc116" /><path d="M1.500 5.500A11 11 0 0 0 10 22l5-8.500-4-2.500z" fill="#31a350" /><path d="M11 5.500h9.500A11 11 0 0 0 1.500 5.500L6 13z" fill="#e33b2e" /><circle cx="11" cy="11" r="5.200" fill="#fff" /><circle cx="11" cy="11" r="4.200" fill="#4285f4" /></svg></App49>
      <App49 active line><svg width="22" height="22" viewBox="0 0 22 22"><rect x="11" y="3" width="10.500" height="16" fill="#fff" stroke="#31752f" /><path d="M13 7h5M15 11h4M14 15h5M17 5v11" stroke="#31752f" strokeWidth="1.500" /><path d="M0 2.500 13 0v22L0 19.500z" fill="#2f7a2d" /><path d="M4.500 16V6.500h2.700a2.600 2.600 0 0 1 0 5.500H4.700" fill="none" stroke="#fff" strokeWidth="1.900" /></svg></App49>
      <div className="ml-auto flex items-center">
        <svg width="12" height="7" viewBox="0 0 12 7"><path d="M.7 6.300 6 1l5.300 5.300" fill="none" stroke="#eee" strokeWidth="1.300" /></svg>
        <svg className="ml-[10px]" width="15" height="16" viewBox="0 0 15 16"><path d="M1.500 1v10l6 4 6-4V1L7.500 5z" fill="none" stroke="#999" strokeWidth="2.500" /><path d="M11 8l4 8H7z" fill="#ef2f2f" /></svg>
        <svg className="ml-[7px]" width="17" height="14" viewBox="0 0 17 14"><path d="M4 2.500h12.500v7.500H4M10 10v3M7 13.500h6M.5.500h5v4h-5zM3 4.500V13" fill="none" stroke="#eee" /></svg>
        <svg className="ml-[7px]" width="17" height="14" viewBox="0 0 17 14"><path d="M.5 4.500h3l4-4v13l-4-4h-3zM9.500 4.500c1.500 1.500 1.500 3.500 0 5M11.500 2.500c3 3 3 6 0 9M13.500.500c4 4 4 9 0 13" fill="none" stroke="#eee" strokeWidth="1.100" /></svg>
        <div className="ml-[11px] flex w-[63px] flex-col items-center text-[12px] leading-[18px]"><T w={27}>11:00</T><T w={63}>2020. 05. 05.</T></div>
        <div className="relative ml-[18px] mr-[9px] flex h-full w-[27px] items-center">
          <svg className="-mt-[2px]" width="17" height="17" viewBox="0 0 17 17"><path d="M0 0h17v13H7l-3 4v-4H0z" fill="#fff" /><path d="M3 4h11M3 6.500h11M3 9h11" stroke="#222" /></svg>
          <span className="absolute left-[8px] top-[19px] flex h-[16px] w-[16px] items-center justify-center rounded-full border border-[#aaa] bg-[#333] text-[11px]">2</span>
        </div>
        <div className="mr-[3px] h-full w-px bg-[#555]" />
      </div>
    </div>
  );
}

export default function App() {
  return (
    <div className="flex h-[1080px] w-[1920px] flex-col overflow-hidden bg-white font-['Open_Sans','Noto_Sans',sans-serif]">
      <TitleBar />
      <Tabs />
      <Ribbon />
      <Timeline />
      <div className="mt-[4px] flex h-[792px] border-t border-[#ababab]">
        <div className="flex w-[25px] items-center justify-center">
          <span className="-rotate-90 whitespace-nowrap text-[13px] font-semibold text-[#31752f]"><T w={89}>GANTT CHART</T></span>
        </div>
        <Sheet />
        <div className="w-[3px] border-l border-[#d0d0d0]" />
        <Chart />
        <div className="flex w-[17px] flex-col pl-[1px] pt-[1px]">
          <div className="flex h-[15px] items-center justify-center border border-[#ababab]"><svg width="8" height="5"><path d="M0 4.500h8L4 0z" fill="#777" /></svg></div>
          <div className="h-[713px] border border-t-2 border-[#ababab]" />
          <div className="h-[29px] bg-[#f2f2f2]" />
          <div className="flex h-[15px] items-center justify-center border border-[#ababab]"><svg width="8" height="5"><path d="M0 0h8L4 4.500z" fill="#777" /></svg></div>
        </div>
      </div>
      <Status />
      <Taskbar />
    </div>
  );
}
